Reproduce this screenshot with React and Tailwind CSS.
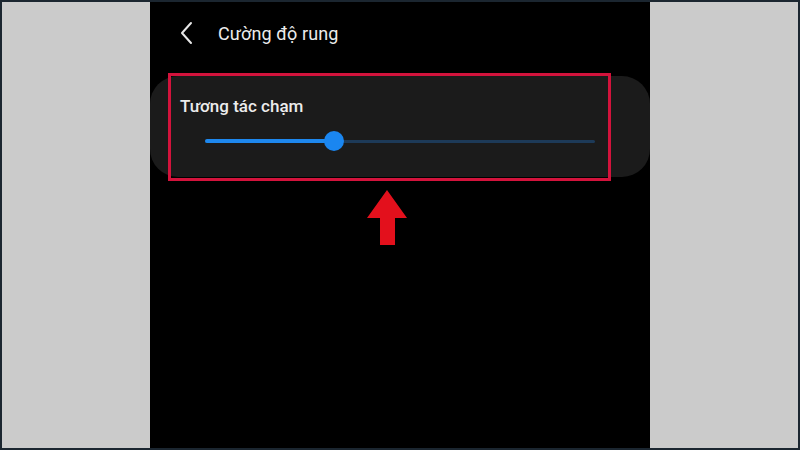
export default function App() {
  const value = 33;
  return (
    <div className="w-[800px] h-[450px] bg-[#1b2630] p-[2px] overflow-hidden" style={{ fontFamily: "Roboto, 'Noto Sans', sans-serif" }}>
      <div className="flex h-full">
        <div className="w-[148px] bg-[#cbcbcb]" />
        <div className="relative w-[500px] bg-black">
          {/* header */}
          <div className="flex items-center h-[62px] pl-[30px]">
            <svg width="14" height="24" viewBox="0 0 14 24" className="mr-[24px]">
              <path d="M11 2 L2 12 L11 22" fill="none" stroke="#e6e6e6" strokeWidth="2" strokeLinecap="round" strokeLinejoin="round" />
            </svg>
            <span className="text-[18px] text-[#ececec] tracking-[0.1px]">Cường độ rung</span>
          </div>

          {/* card */}
          <div className="mt-[12px] h-[101px] rounded-[28px] bg-[#1b1b1b] pt-[18px]">
            <div className="pl-[30px] text-[17px] font-medium text-[#ececec] leading-[24px]">Tương tác chạm</div>
            <div className="relative mx-[55px] mt-[13px] h-[20px] flex items-center">
              <div className="h-[3px] w-full rounded-full bg-[#1d3a58]" />
              <div className="absolute left-0 h-[4px] rounded-full bg-[#1e88ee]" style={{ width: `${value}%` }} />
              <div className="absolute w-[20px] h-[20px] -ml-[10px] rounded-full bg-[#1a86f0]" style={{ left: `${value}%` }} />
            </div>
          </div>

          {/* annotation box */}
          <div className="absolute left-[18px] top-[71px] w-[443px] h-[108px] border-[3px] border-[#d3133c]" />

          {/* arrow */}
          <svg className="absolute left-[215px] top-[187px]" width="44" height="58" viewBox="0 0 44 58">
            <polygon points="22,1 42,29 30,29 30,56 15,56 15,29 2,29" fill="#e3101c" />
          </svg>
        </div>
        <div className="w-[148px] bg-[#cbcbcb]" />
      </div>
    </div>
  );
}
